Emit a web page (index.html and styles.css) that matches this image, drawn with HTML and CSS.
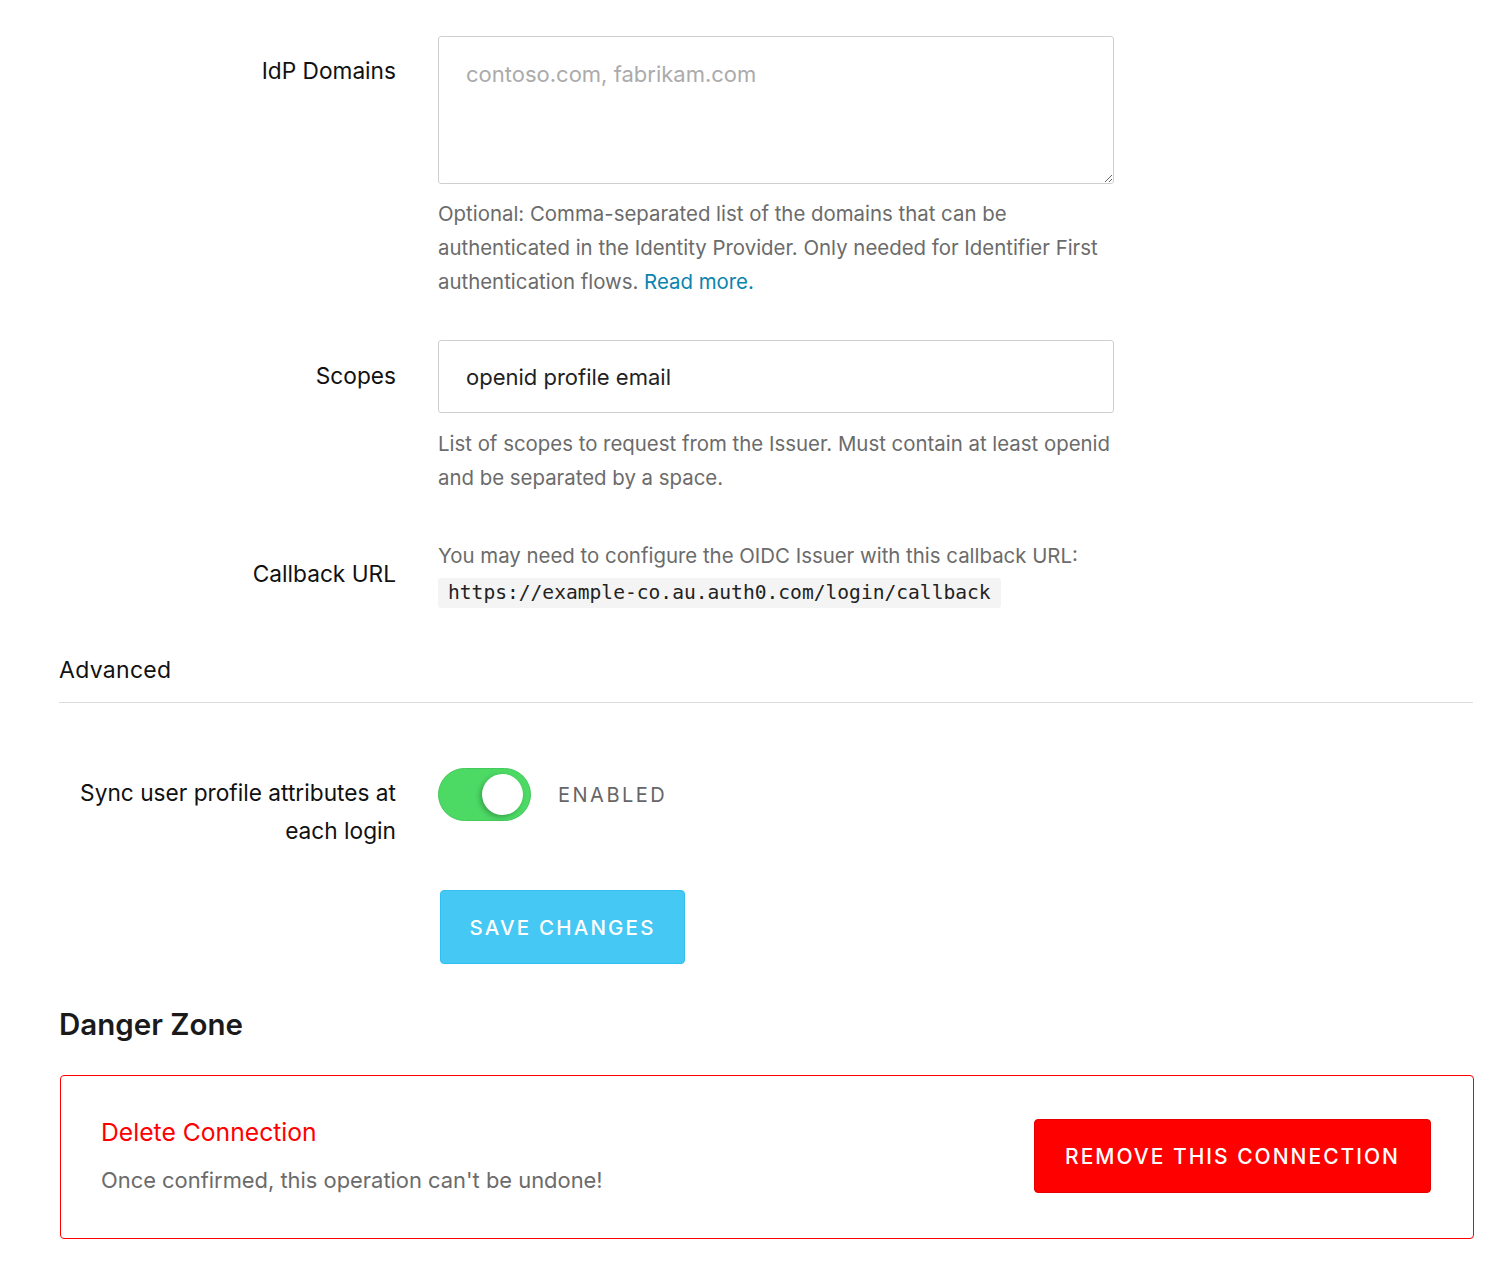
FILE: index.html
```html
<!DOCTYPE html>
<html lang="en">
<head>
<meta charset="utf-8">
<title>Connection settings</title>
<link rel="stylesheet" href="styles.css">
</head>
<body>
<div class="page">
  <div class="form-row">
    <label class="label label-top" for="domains">IdP Domains</label>
    <div class="control">
      <textarea id="domains" class="textarea" placeholder="contoso.com, fabrikam.com"></textarea>
      <p class="help">Optional: Comma-separated list of the domains that can be authenticated in the Identity Provider. Only needed for Identifier First authentication flows. <a class="link" href="#">Read more.</a></p>
    </div>
  </div>

  <div class="form-row row-scopes">
    <label class="label label-input" for="scopes">Scopes</label>
    <div class="control">
      <input id="scopes" class="input" type="text" value="openid profile email">
      <p class="help help-scopes">List of scopes to request from the Issuer. Must contain at least openid and be separated by a space.</p>
    </div>
  </div>

  <div class="form-row row-center">
    <div class="label">Callback URL</div>
    <div class="control">
      <p class="help help-callback">You may need to configure the OIDC Issuer with this callback URL:</p>
      <code class="code">https://example-co.au.auth0.com/login/callback</code>
    </div>
  </div>

  <h3 class="section-title">Advanced</h3>

  <div class="form-row row-toggle">
    <div class="label label-toggle">Sync user profile attributes at each login</div>
    <div class="control toggle-wrap">
      <span class="switch"><span class="knob"></span></span>
      <span class="switch-text">ENABLED</span>
    </div>
  </div>

  <div class="form-row row-save">
    <div></div>
    <div class="control">
      <button class="btn btn-save" type="button">SAVE CHANGES</button>
    </div>
  </div>

  <h2 class="danger-title">Danger Zone</h2>
  <div class="danger-box">
    <div class="danger-text">
      <div class="danger-heading">Delete Connection</div>
      <div class="danger-desc">Once confirmed, this operation can't be undone!</div>
    </div>
    <button class="btn btn-danger" type="button">REMOVE THIS CONNECTION</button>
  </div>
</div>
</body>
</html>
```

FILE: styles.css
```css
* { box-sizing: border-box; }

html, body {
  margin: 0;
  padding: 0;
  background: #fff;
}

body {
  font-family: Inter, "Open Sans", "Liberation Sans", sans-serif;
  color: #1c1c1c;
  font-size: 20px;
}

.page {
  width: 1473px;
  padding: 36px 0 24px 59px;
}

.form-row {
  display: grid;
  grid-template-columns: 337px 676px;
  column-gap: 42px;
  margin-bottom: 41px;
  align-items: start;
}

.row-scopes { margin-bottom: 44px; }

.row-center {
  align-items: center;
  margin-bottom: 47px;
}

.label {
  text-align: right;
  font-size: 22.7px;
  line-height: 30px;
  color: #111;
}

.label-top { padding-top: 20px; }
.label-input { padding-top: 21px; }

.control { min-width: 0; }

.textarea {
  display: block;
  width: 676px;
  height: 148px;
  border: 1px solid #cfcfcf;
  border-radius: 3px;
  padding: 22px 27px;
  font-family: inherit;
  font-size: 22px;
  line-height: 30px;
  color: #333;
  resize: vertical;
  outline: none;
}

.textarea::placeholder { color: #ababab; }

.input {
  display: block;
  width: 676px;
  height: 73px;
  border: 1px solid #cfcfcf;
  border-radius: 3px;
  padding: 0 27px;
  font-family: inherit;
  font-size: 22px;
  color: #222;
  outline: none;
}

.help {
  margin: 13px 0 0;
  font-size: 20.4px;
  line-height: 34px;
  color: #6b6b6b;
}

.help-scopes { margin-top: 14px; }

.help-callback { margin: 0; }

.link {
  color: #0a84ae;
  text-decoration: none;
}

.code {
  display: inline-block;
  margin-top: 5px;
  padding: 0 10px;
  height: 30px;
  line-height: 30px;
  background: #f4f4f4;
  border-radius: 3px;
  font-family: "DejaVu Sans Mono", "Liberation Mono", monospace;
  font-size: 19.6px;
  color: #222;
}

.section-title {
  margin: 0;
  font-size: 23px;
  font-weight: 400;
  line-height: 30px;
  letter-spacing: 0.3px;
  padding-bottom: 17px;
  border-bottom: 1px solid #dddddd;
  width: 1414px;
  color: #111;
}

.row-toggle {
  margin-top: 65px;
  margin-bottom: 40px;
}

.label-toggle {
  padding-top: 6px;
  line-height: 38px;
}

.toggle-wrap {
  display: flex;
  align-items: center;
  gap: 27px;
}

.switch {
  position: relative;
  display: inline-block;
  width: 93px;
  height: 53px;
  border-radius: 27px;
  background: #4cd964;
  border: 1px solid #44c95a;
}

.knob {
  position: absolute;
  top: 5px;
  right: 7px;
  width: 41px;
  height: 41px;
  border-radius: 50%;
  background: #fff;
  box-shadow: -2px 2px 5px rgba(0,0,0,0.25);
}

.switch-text {
  font-size: 20px;
  letter-spacing: 2.5px;
  color: #666;
}

.row-save { margin-bottom: 42px; }

.btn {
  border-radius: 4px;
  font-family: inherit;
  color: #fff;
  font-weight: 500;
  cursor: pointer;
}

.btn-save {
  margin-left: 2px;
  width: 245px;
  height: 74px;
  background: #45c8f4;
  border: 1px solid #2fc0f0;
  font-size: 20.5px;
  letter-spacing: 2.2px;
}

.danger-title {
  margin: 0 0 33px;
  font-size: 29.5px;
  font-weight: 600;
  line-height: 36px;
  color: #1a1a1a;
}

.danger-box {
  width: 1414px;
  margin-left: 1px;
  border: 1px solid #ff0000;
  border-radius: 4px;
  padding: 39px 42px 41px 40px;
  display: flex;
  align-items: center;
  justify-content: space-between;
}

.danger-heading {
  color: #ff0000;
  font-size: 24.7px;
  line-height: 34px;
  margin-bottom: 14px;
}

.danger-desc {
  color: #6b6b6b;
  font-size: 21.9px;
  line-height: 34px;
}

.btn-danger {
  width: 397px;
  height: 74px;
  background: #ff0000;
  border: 1px solid #e60000;
  font-size: 21px;
  letter-spacing: 2px;
}
```
